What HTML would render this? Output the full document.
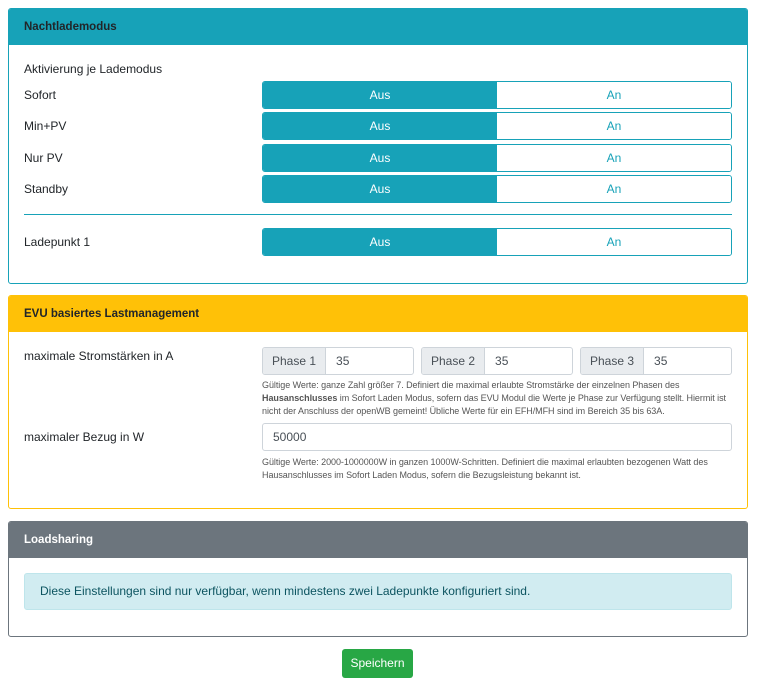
<!DOCTYPE html>
<html><head><meta charset="utf-8"><style>
*{box-sizing:border-box;margin:0;padding:0}
body{width:765px;height:679px;background:#fff;font-family:"Liberation Sans",sans-serif;font-size:12px;color:#212529;position:relative;overflow:hidden}
.card{position:absolute;left:8px;width:740px;border:1px solid;border-radius:3px;overflow:hidden}
.hd{height:36px;padding-left:15px;line-height:36px;font-weight:bold;font-size:11.5px}
.a{position:absolute;font-size:12px}
.bg{position:absolute;left:262px;width:470px;height:28px;display:flex;border:1px solid #17a2b8;border-radius:3px;overflow:hidden}
.bg div{flex:1;text-align:center;line-height:26px;font-size:12px}
.bg .on{background:#17a2b8;color:#fff}
.bg .off{background:#fff;color:#17a2b8}
.ig{position:absolute;top:347px;height:28px;width:152px;display:flex;border:1px solid #ced4da;border-radius:3px;overflow:hidden}
.ig .p{background:#e9ecef;color:#495057;padding:0 9px;line-height:26px;border-right:1px solid #ced4da}
.ig .v{padding-left:10px;line-height:26px;color:#495057}
.help{position:absolute;left:262px;width:472px;font-size:9px;line-height:13px;color:#555;letter-spacing:-0.05px}
</style></head><body>
<div class="card" style="top:8px;height:276px;border-color:#17a2b8">
<div class="hd" style="background:#17a2b8;color:#212529">Nachtlademodus</div></div>
<div class="a" style="left:24px;top:62px">Aktivierung je Lademodus</div>
<div class="a" style="left:24px;top:88px">Sofort</div>
<div class="a" style="left:24px;top:119px">Min+PV</div>
<div class="a" style="left:24px;top:151px">Nur PV</div>
<div class="a" style="left:24px;top:182px">Standby</div>
<div class="a" style="left:24px;top:235px">Ladepunkt 1</div>
<div class="bg" style="top:81px"><div class="on">Aus</div><div class="off">An</div></div>
<div class="bg" style="top:112px"><div class="on">Aus</div><div class="off">An</div></div>
<div class="bg" style="top:144px"><div class="on">Aus</div><div class="off">An</div></div>
<div class="bg" style="top:175px"><div class="on">Aus</div><div class="off">An</div></div>
<div style="position:absolute;left:24px;top:214px;width:708px;height:1px;background:#17a2b8"></div>
<div class="bg" style="top:228px"><div class="on">Aus</div><div class="off">An</div></div>

<div class="card" style="top:295px;height:214px;border-color:#ffc107">
<div class="hd" style="background:#ffc107;color:#212529">EVU basiertes Lastmanagement</div></div>
<div class="a" style="left:24px;top:349px">maximale Stromstärken in A</div>
<div class="ig" style="left:262px"><div class="p">Phase 1</div><div class="v">35</div></div>
<div class="ig" style="left:421px"><div class="p">Phase 2</div><div class="v">35</div></div>
<div class="ig" style="left:580px"><div class="p">Phase 3</div><div class="v">35</div></div>
<div class="help" style="top:379px">Gültige Werte: ganze Zahl größer 7. Definiert die maximal erlaubte Stromstärke der einzelnen Phasen des <b>Hausanschlusses</b> im Sofort Laden Modus, sofern das EVU Modul die Werte je Phase zur Verfügung stellt. Hiermit ist nicht der Anschluss der openWB gemeint! Übliche Werte für ein EFH/MFH sind im Bereich 35 bis 63A.</div>
<div class="a" style="left:24px;top:430px">maximaler Bezug in W</div>
<div style="position:absolute;left:262px;top:423px;width:470px;height:28px;border:1px solid #ced4da;border-radius:3px;padding-left:10px;line-height:26px;color:#495057">50000</div>
<div class="help" style="top:456px">Gültige Werte: 2000-1000000W in ganzen 1000W-Schritten. Definiert die maximal erlaubten bezogenen Watt des Hausanschlusses im Sofort Laden Modus, sofern die Bezugsleistung bekannt ist.</div>

<div class="card" style="top:521px;height:116px;border-color:#6c757d">
<div class="hd" style="background:#6c757d;color:#fff">Loadsharing</div></div>
<div style="position:absolute;left:24px;top:573px;width:708px;height:37px;background:#d1ecf1;border:1px solid #bee5eb;border-radius:3px;color:#0c5460;padding-left:15px;line-height:35px">Diese Einstellungen sind nur verfügbar, wenn mindestens zwei Ladepunkte konfiguriert sind.</div>

<div style="position:absolute;left:342px;top:649px;width:71px;height:29px;background:#28a745;border-radius:3px;color:#fff;text-align:center;line-height:29px">Speichern</div>
</body></html>
